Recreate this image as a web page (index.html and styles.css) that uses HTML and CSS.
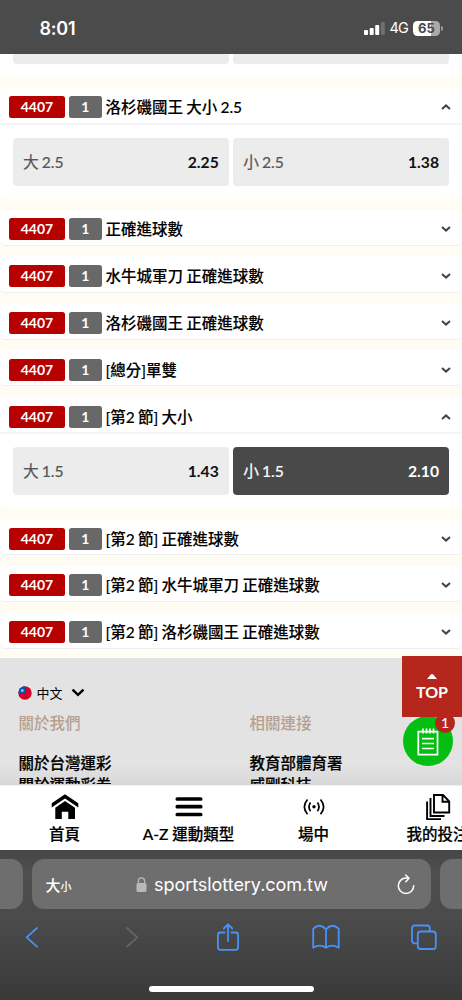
FILE: index.html
```html
<!DOCTYPE html>
<html lang="zh-Hant">
<head>
<meta charset="utf-8">
<title>sportslottery.com.tw</title>
<link rel="stylesheet" href="styles.css">
</head>
<body>
<div class="phone">
  <header class="status">
    <span class="clock">8:01</span>
    <div class="signals">
      <svg class="bars" width="21" height="13" viewBox="0 0 21 13"><g fill="#fff"><rect x="0" y="8" width="4" height="5" rx="1"/><rect x="5.7" y="6" width="4" height="7" rx="1"/><rect x="11.2" y="3" width="4" height="10" rx="1"/><rect x="16.8" y="0" width="4" height="13" rx="1" opacity=".2"/></g></svg>
      <span class="net">4G</span>
      <span class="battery">65</span>
      <span class="battery-tip"></span>
    </div>
  </header>

  <main class="markets">
    <section class="card card-cut"><div class="options"><div class="option"></div><div class="option"></div></div></section>

    <section class="card open">
      <div class="head"><b class="code">4407</b><b class="num">1</b><h2>洛杉磯國王 大小 2.5</h2><svg class="chev" viewBox="0 0 10 6"><path d="M1 5 5 1.4 9 5"/></svg></div>
      <div class="options"><div class="option"><span>大 2.5</span><b>2.25</b></div><div class="option"><span>小 2.5</span><b>1.38</b></div></div>
    </section>
    <section class="card"><div class="head"><b class="code">4407</b><b class="num">1</b><h2>正確進球數</h2><svg class="chev" viewBox="0 0 10 6"><path d="M1 1 5 4.6 9 1"/></svg></div></section>
    <section class="card"><div class="head"><b class="code">4407</b><b class="num">1</b><h2>水牛城軍刀 正確進球數</h2><svg class="chev" viewBox="0 0 10 6"><path d="M1 1 5 4.6 9 1"/></svg></div></section>
    <section class="card"><div class="head"><b class="code">4407</b><b class="num">1</b><h2>洛杉磯國王 正確進球數</h2><svg class="chev" viewBox="0 0 10 6"><path d="M1 1 5 4.6 9 1"/></svg></div></section>
    <section class="card"><div class="head"><b class="code">4407</b><b class="num">1</b><h2>[總分]單雙</h2><svg class="chev" viewBox="0 0 10 6"><path d="M1 1 5 4.6 9 1"/></svg></div></section>
    <section class="card open">
      <div class="head"><b class="code">4407</b><b class="num">1</b><h2>[第2 節] 大小</h2><svg class="chev" viewBox="0 0 10 6"><path d="M1 5 5 1.4 9 5"/></svg></div>
      <div class="options"><div class="option"><span>大 1.5</span><b>1.43</b></div><div class="option picked"><span>小 1.5</span><b>2.10</b></div></div>
    </section>
    <section class="card"><div class="head"><b class="code">4407</b><b class="num">1</b><h2>[第2 節] 正確進球數</h2><svg class="chev" viewBox="0 0 10 6"><path d="M1 1 5 4.6 9 1"/></svg></div></section>
    <section class="card"><div class="head"><b class="code">4407</b><b class="num">1</b><h2>[第2 節] 水牛城軍刀 正確進球數</h2><svg class="chev" viewBox="0 0 10 6"><path d="M1 1 5 4.6 9 1"/></svg></div></section>
    <section class="card"><div class="head"><b class="code">4407</b><b class="num">1</b><h2>[第2 節] 洛杉磯國王 正確進球數</h2><svg class="chev" viewBox="0 0 10 6"><path d="M1 1 5 4.6 9 1"/></svg></div></section>
  </main>

  <footer class="site-foot">
    <div class="lang">
      <svg width="14" height="14" viewBox="0 0 14 14"><circle cx="7" cy="7" r="6.7" fill="#d80027"/><path d="M7 7H.3A6.7 6.7 0 0 1 7 .3z" fill="#0052b4"/><circle cx="4.3" cy="4.5" r="1.5" fill="#8fbbe8"/></svg>
      <span>中文</span>
      <svg width="14" height="9" viewBox="0 0 14 9"><path d="M1.5 1.7 7 6.8l5.5-5.1" fill="none" stroke="#000" stroke-width="2.5"/></svg>
    </div>
    <div class="columns">
      <div><h3>關於我們</h3><p>關於台灣運彩</p><p>關於運動彩券</p></div>
      <div><h3>相關連接</h3><p>教育部體育署</p><p>威剛科技</p></div>
    </div>
    <div class="to-top"><svg width="10" height="5" viewBox="0 0 10 5"><path d="M0 5 3.8.6Q5-.6 6.2.6L10 5z" fill="#fff"/></svg><span>TOP</span></div>
    <div class="slip">
      <svg width="22" height="28" viewBox="0 0 22 28" fill="none" stroke="#fff" stroke-width="1.7"><path d="M1.3 3.6H20.5V26.7H1.3zM6 .5V5.5M9.5 .5V5.5M13 .5V5.5M16.5 .5V5.5M5 10.6H17M5 15.5H17M5 20.5H17"/></svg>
      <i>1</i>
    </div>
  </footer>

  <nav class="tabs">
    <div class="tab"><svg width="28" height="26" viewBox="0 0 28 26"><path d="M.7 13.5V9.3L14 .2 27.3 9.3v4.2L14 4.4z"/><path d="M4.3 13.7 14 7 24 13.7V25H17.3V17.8H10.8V25H4.3z"/></svg><span>首頁</span></div>
    <div class="tab"><svg width="28" height="26" viewBox="0 0 28 26"><path d="M2.3 5H25.7M2.3 12.7H25.7M2.3 20.5H25.7" stroke="#000" stroke-width="3.7" stroke-linecap="round"/></svg><span>A-Z 運動類型</span></div>
    <div class="tab"><svg width="28" height="26" viewBox="0 0 28 26" fill="none" stroke="#000" stroke-width="1.7"><circle cx="14" cy="12.8" r="1.7" fill="#000" stroke="none"/><path d="M10.5 8.5Q7.5 12.8 10.5 17.2M17.5 8.5Q20.5 12.8 17.5 17.2M7.5 5.5Q1.3 12.8 7.5 20.2M20.5 5.5Q26.7 12.8 20.5 20.2"/></svg><span>場中</span></div>
    <div class="tab"><svg width="28" height="26" viewBox="0 0 28 26" fill="none" stroke="#000" stroke-width="1.9"><path d="M10 1H19L25.2 7.3V18.5H10zM18.5 1V7.8H25M6.5 4V22H20.5M3.1 7.5V25.2H17"/></svg><span>我的投注</span></div>
  </nav>

  <section class="browser">
    <div class="address-row">
      <div class="peek peek-left"></div>
      <div class="address">
        <span class="size">大<small>小</small></span>
        <svg class="lock" width="11" height="15" viewBox="0 0 11 15"><rect x=".5" y="6" width="10" height="9" rx="1.5" fill="#b9b8bf"/><path d="M2.4 7V4a3.1 3.1 0 0 1 6.2 0v3" fill="none" stroke="#b9b8bf" stroke-width="1.3"/></svg>
        <span class="url">sportslottery.com.tw</span>
        <svg class="reload" width="18" height="21" viewBox="0 0 18 21" fill="none" stroke="#fff" stroke-width="1.5" stroke-linecap="round" stroke-linejoin="round"><path d="M16.7 11.8A7.7 7.7 0 1 1 9 4.1H11.7M8.7 1 12 4.2 8.8 7.7"/></svg>
      </div>
      <div class="peek peek-right"></div>
    </div>
    <div class="tools">
      <svg width="28" height="28" viewBox="0 0 28 28"><path d="M19 5 8.6 14.3 19 23.6"/></svg>
      <svg class="off" width="28" height="28" viewBox="0 0 28 28"><path d="M11 5 21.4 14.3 11 23.6"/></svg>
      <svg width="28" height="28" viewBox="0 0 28 28"><path d="M10.5 9.5H6.5Q3.9 9.5 3.9 12V24Q3.9 26.8 6.5 26.8H21.5Q24.1 26.8 24.1 24V12Q24.1 9.5 21.5 9.5H17.5M14 18V1.5M9.8 5.5 14 1.3 18.2 5.5"/></svg>
      <svg width="28" height="28" viewBox="0 0 28 28"><path d="M14 6.3Q8-.5 1.2 5.7V24.8Q8 20.5 14 24.8 20 20.5 26.7 24.8V5.7Q20-.5 14 6.3V24.8"/></svg>
      <svg width="28" height="28" viewBox="0 0 28 28"><rect x="7.8" y="8.5" width="18" height="17.5" rx="2.8"/><path d="M7.5 20.3H4.8Q2 20.3 2 17.5V5.3Q2 2.5 4.8 2.5H17Q19.8 2.5 19.8 5.3V8"/></svg>
    </div>
    <div class="home-bar"></div>
  </section>
</div>
</body>
</html>
```
FILE: styles.css
```css
* { box-sizing: border-box; }
body { margin: 0; font-family: Lato, "Noto Sans CJK TC", sans-serif; color: #000; }
h2, h3, p { margin: 0; }
svg { display: block; flex: none; }
.phone { width: 462px; height: 1000px; overflow: hidden; display: flex; flex-direction: column; background: #fffcf3; }
.status { height: 53.5px; flex: none; background: #4b4b4b; color: #fff; display: flex; justify-content: space-between; padding: 18px 19px 0 39.5px; font-family: Inter, sans-serif; }
.clock { font-size: 18px; font-weight: 600; line-height: 21px; letter-spacing: -.2px; }
.signals { display: flex; align-items: center; height: 20px; }
.net { font-size: 14.5px; line-height: 20px; margin: 0 0 0 4.5px; width: 23.5px; letter-spacing: -.8px; }
.battery { width: 27px; height: 15px; border-radius: 4.5px; background: linear-gradient(90deg, #fff 66%, #aaa 66%); color: #4b4b4b; font-size: 13px; line-height: 15px; font-weight: 700; text-align: center; }
.battery-tip { width: 2px; height: 5px; margin-left: 1px; border-radius: 0 2px 2px 0; background: #999; }

.markets { height: 604.5px; flex: none; }
.card { height: 36.3px; margin-bottom: 10.55px; background: #fff; border-bottom: 1px solid #eeeef5; border-radius: 5px; }
.open { height: 111.35px; border-bottom: 0; }
.card-cut { height: 23.7px; border: 0; border-radius: 0 0 5px 5px; }
.card-cut .option { height: 10px; border-radius: 0 0 4px 4px; }
.card-cut .options { padding-top: 0; }
.head { height: 36.3px; padding: 3px 11px 0 9px; display: flex; align-items: center; }
.open .head { height: 37.3px; border-bottom: 2px solid #f5f4f9; padding-top: 4px; }
.code, .num { height: 22px; border-radius: 2.5px; color: #fff; font-size: 14px; font-weight: 700; line-height: 22px; text-align: center; }
.code { width: 56px; background: #b70000; margin-right: 4px; }
.num { width: 32.5px; background: #686868; margin-right: 4px; }
.head h2 { font-size: 15.5px; line-height: 22px; font-weight: 500; flex: 1; white-space: nowrap; word-spacing: -.7px; -webkit-text-stroke: .1px #000; }
.chev { width: 10px; height: 6px; fill: none; stroke: #444; stroke-width: 2; }
.options { padding: 13px 13px 0; display: flex; gap: 4.5px; }
.option { flex: 1; height: 48px; border-radius: 4px; background: #ececec; padding: 0 10px 1px; display: flex; align-items: center; justify-content: space-between; font-size: 15.7px; color: #111; }
.option span { color: #555; word-spacing: -1px; -webkit-text-stroke: .2px currentColor; }
.picked, .picked span { background: #494949; color: #fff; }

.site-foot { height: 126.5px; flex: none; background: linear-gradient(#e3e3e3 83%, #d8d8d8); position: relative; padding: 25px 18.5px 0; }
.lang { height: 19px; display: flex; align-items: center; font-size: 13px; margin-left: -1px; }
.lang span { margin: 0 8px 0 5px; }
.columns { display: grid; grid-template-columns: 231px 1fr; height: 81.5px; overflow: hidden; font-size: 15.5px; }
.columns h3 { color: #b79e90; font-size: 15.5px; font-weight: 500; line-height: 22px; margin: 10px 0 18px; }
.columns p { line-height: 22px; font-weight: 500; -webkit-text-stroke: .2px #000; }
.to-top { position: absolute; right: 0; top: -2px; width: 60px; height: 61px; background: #b5261c; color: #fff; display: flex; flex-direction: column; align-items: center; padding-top: 18px; font-weight: 700; font-size: 16px; line-height: 20px; }
.to-top span { margin-top: 3px; }
.slip { position: absolute; left: 403px; top: 58px; width: 50px; height: 50px; border-radius: 50%; background: #04be11; display: flex; align-items: center; justify-content: center; z-index: 1; clip-path: inset(1px -10px -5px -5px); }
.slip svg { margin-top: 1px; }
.slip i { position: absolute; left: 32px; top: -3px; width: 20px; height: 20px; border-radius: 50%; background: #b5261c; color: #fff; font: 500 14px/20px Lato, sans-serif; text-align: center; }

.tabs { height: 65.5px; flex: none; background: #fff; display: grid; grid-template-columns: 129px 119px 131px 117px; border-top: 1px solid #f0f0f0; }
.tab { display: flex; flex-direction: column; align-items: center; padding-top: 8px; font-size: 15.5px; font-weight: 500; white-space: nowrap; line-height: 24px; -webkit-text-stroke: .2px #000; }
.tab span { margin-top: 2px; }

.browser { height: 150px; flex: none; background: linear-gradient(#474747 0, #4e4e4e 15%, #4b4b4b 45%, #393939 100%); }
.address-row { display: flex; gap: 9px; padding-top: 9px; }
.address-row > div { height: 50px; background: #6e6e6e; }
.peek { width: 22.5px; flex: none; }
.peek-left { border-radius: 0 12px 12px 0; }
.peek-right { border-radius: 12px 0 0 12px; }
.address { width: 399px; flex: none; border-radius: 12px; display: flex; align-items: center; color: #fff; padding-left: 14px; }
.size { font: 500 15px "Noto Sans CJK TC", sans-serif; width: 90.5px; }
.size small { font-size: 11px; }
.url { font-family: Inter, sans-serif; font-size: 18px; width: 236px; margin-left: 7px; letter-spacing: -.05px; }
.reload { margin-left: 7px; }
.tools { display: flex; justify-content: space-between; padding: 14px 24px 0 18px; height: 78px; }
.tools svg { fill: none; stroke: #4991f7; stroke-width: 1.8; stroke-linecap: round; stroke-linejoin: round; }
.tools .off { stroke: #666; }
.home-bar { width: 165px; height: 6px; border-radius: 3px; background: #fff; margin: -1.5px auto 0; }
```
